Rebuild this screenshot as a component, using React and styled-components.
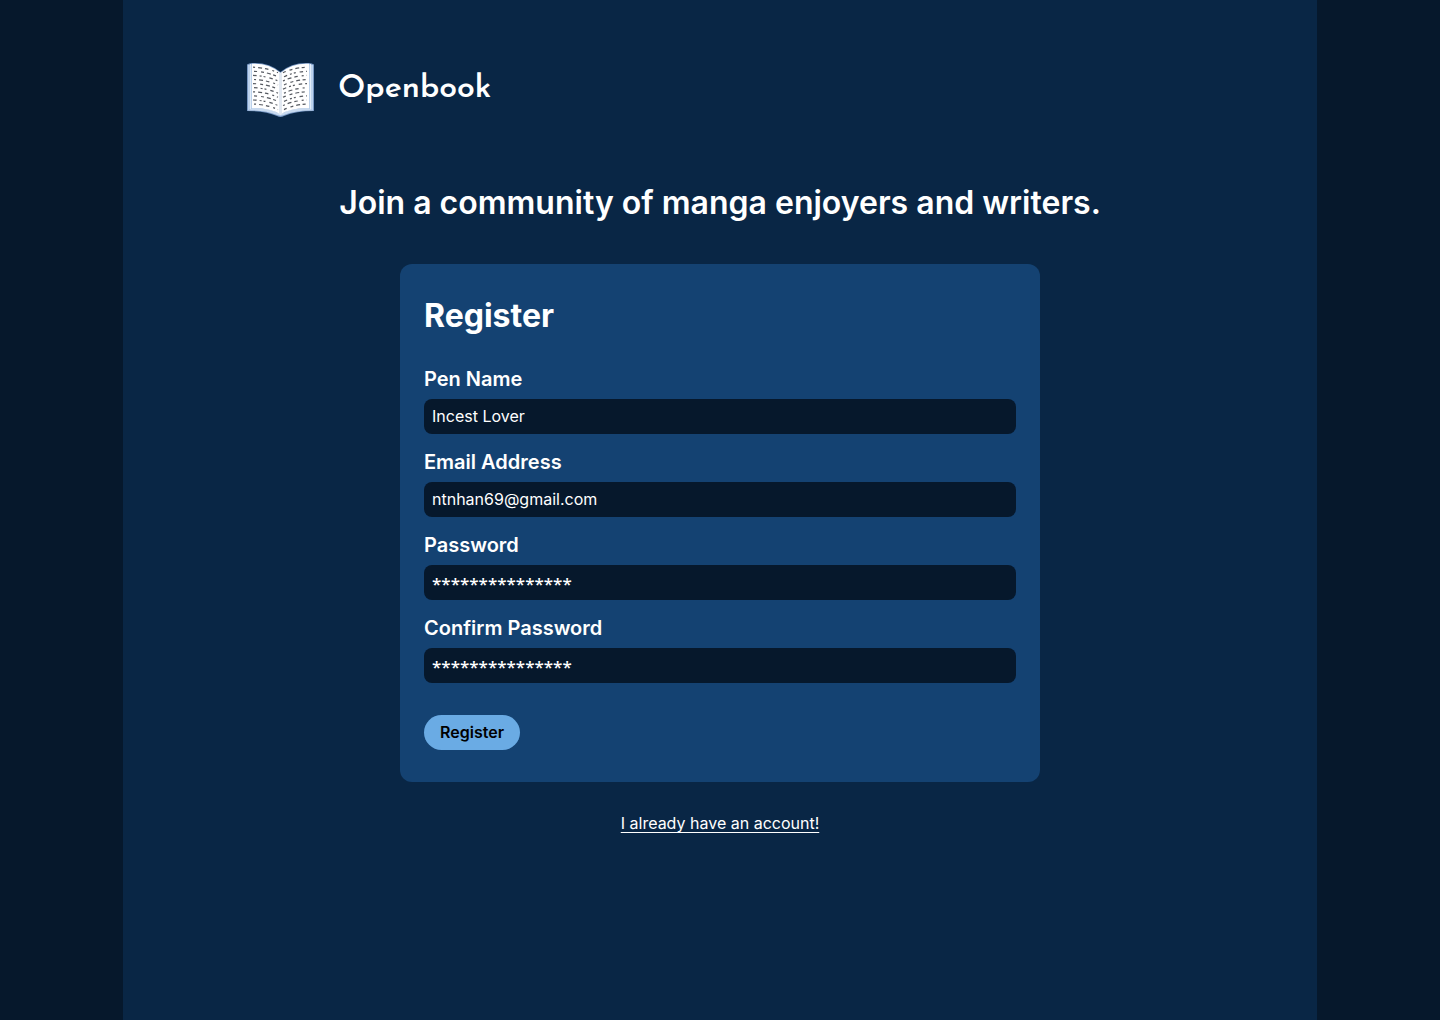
import React from "react";
import styled, { createGlobalStyle } from "styled-components";

const GlobalStyle = createGlobalStyle`
  *, *::before, *::after { box-sizing: border-box; }
  body {
    margin: 0;
    background: #06182c;
    color: #fff;
    font-family: Inter, "Liberation Sans", sans-serif;
    font-size: 16px;
    line-height: 19px;
  }
`;

const Page = styled.div`
  width: 100%;
  max-width: 1194px;
  min-height: 100vh;
  margin: 0 auto;
  background: #092645;
`;

const Header = styled.header`
  display: flex;
  align-items: center;
  gap: 24px;
  padding: 56px 123px 0;
`;

const Brand = styled.span`
  font-family: "Josefin Sans", Lato, sans-serif;
  font-size: 32px;
  font-weight: 600;
  line-height: 40px;
  padding-bottom: 2px;
`;

const Main = styled.main`
  display: flex;
  flex-direction: column;
  align-items: center;
  padding: 59px 24px 32px;
`;

const Tagline = styled.h1`
  margin: 0 0 42px;
  font-size: 32px;
  font-weight: 600;
  line-height: 39px;
  text-align: center;
`;

const Card = styled.form`
  width: 100%;
  max-width: 640px;
  padding: 32px 24px;
  border-radius: 12px;
  background: #144272;
`;

const CardTitle = styled.h2`
  margin: 0 0 32px;
  font-size: 32px;
  font-weight: 700;
  line-height: 39px;
`;

const Fields = styled.div`
  display: flex;
  flex-direction: column;
  gap: 16px;
  margin-bottom: 32px;
`;

const Field = styled.div`
  display: flex;
  flex-direction: column;
  gap: 8px;
`;

const Label = styled.label`
  font-size: 20px;
  font-weight: 600;
  line-height: 24px;
`;

const Input = styled.input`
  width: 100%;
  height: 35px;
  padding: 7px 8px 9px;
  border: 0;
  border-radius: 8px;
  background: #06182c;
  color: #fff;
  font: inherit;
`;

const MaskedInput = styled(Input)`
  padding: 9px 8px 7px;
  font-family: "Noto Sans", "Open Sans", sans-serif;
  font-size: 17px;
  font-weight: 500;
`;

const Submit = styled.button`
  display: block;
  padding: 8px 16px;
  border: 0;
  border-radius: 18px;
  background: #6aabe4;
  color: #000;
  font: inherit;
  font-weight: 600;
  cursor: pointer;
`;

const LoginLink = styled.a`
  margin-top: 32px;
  color: #fff;
  text-decoration: underline;
  text-underline-offset: 3px;
`;

const LogoSvg = styled.svg`
  display: block;
  flex: none;
`;

const printDashes = ["2 3 4 3 3.5 4", "3 4 3 3 4 2.5", "3.5 3 2 2 2 4"];
const printRows = Array.from({ length: 10 }, (_, i) => i);

function BookLogo() {
  return (
    <LogoSvg width="68" height="68" viewBox="0 -7 68 68" role="img" aria-label="Open book">
      <path d="M1 1.5 Q3 0 6 0 Q23 -1 34.5 9 Q46 -1 63 0 Q66 0 68 1.5 V48 Q50 48 38 53 Q34.5 55 31 53 Q19 48 1 48Z" fill="#7898c4" />
      <path d="M2 2 L6 1 V45 L2 47.5Z M67 2 L63 1 V45 L67 47.5Z" fill="#bcd2ec" />
      <path d="M4.5 1 V46 M64.5 1 V46" stroke="#e2edf9" strokeWidth="1" />
      <path d="M6 45 Q24 44.5 34.5 51 Q45 44.5 63 45 L67 47.5 Q50 47 38 52 Q34.5 53.5 31 52 Q19 47 2 47.5Z" fill="#c8daf0" />
      <path d="M6 .8 Q23 0 34.5 10 V51.5 Q24 44.5 6 45Z" fill="#fff" />
      <path d="M63 .8 Q46 0 34.5 10 V51.5 Q45 44.5 63 45Z" fill="#fff" />
      <path d="M33 9 L34.5 10 L36 9 V51 L34.5 52 L33 51Z" fill="#e2e9f2" />
      <g fill="none" stroke="#555960" strokeWidth="1.2">
        {printRows.map((i) => {
          const y = 4.2 + i * 4.1;
          return (
            <React.Fragment key={i}>
              <path d={`M${7 + (i % 2)} ${y} Q21 ${y + 0.5} 32 ${y + 5.5}`} strokeDasharray={printDashes[i % 3]} />
              <path d={`M${37 + (i % 2)} ${y + 5.5} Q48 ${y + 0.5} 61 ${y}`} strokeDasharray={printDashes[(i + 1) % 3]} />
            </React.Fragment>
          );
        })}
      </g>
    </LogoSvg>
  );
}

const fields = [
  { id: "pen-name", label: "Pen Name", type: "text", value: "Incest Lover" },
  { id: "email", label: "Email Address", type: "email", value: "ntnhan69@gmail.com" },
  { id: "password", label: "Password", type: "text", value: "***************", masked: true },
  { id: "confirm-password", label: "Confirm Password", type: "text", value: "***************", masked: true },
];

export default function App() {
  return (
    <>
      <GlobalStyle />
      <Page>
        <Header>
          <BookLogo />
          <Brand>Openbook</Brand>
        </Header>
        <Main>
          <Tagline>Join a community of manga enjoyers and writers.</Tagline>
          <Card onSubmit={(event) => event.preventDefault()}>
            <CardTitle>Register</CardTitle>
            <Fields>
              {fields.map(({ id, label, type, value, masked }) => {
                const Control = masked ? MaskedInput : Input;
                return (
                  <Field key={id}>
                    <Label htmlFor={id}>{label}</Label>
                    <Control
                      id={id}
                      name={id}
                      type={type}
                      defaultValue={value}
                      autoComplete="off"
                      spellCheck={false}
                    />
                  </Field>
                );
              })}
            </Fields>
            <Submit type="submit">Register</Submit>
          </Card>
          <LoginLink href="#login">I already have an account!</LoginLink>
        </Main>
      </Page>
    </>
  );
}
